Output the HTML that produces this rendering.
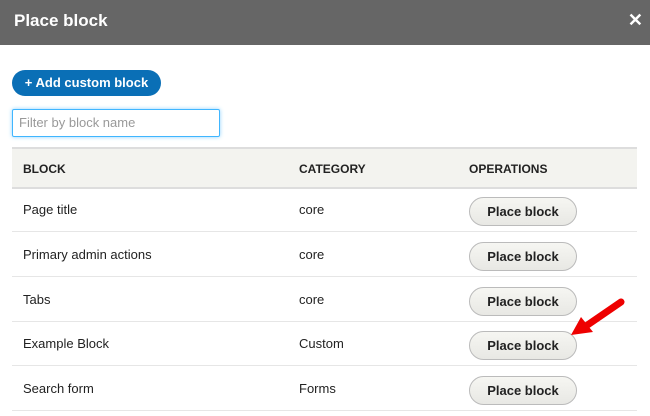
<!DOCTYPE html>
<html><head><style>
body{margin:0;width:650px;height:416px;background:#fff;font-family:"Liberation Sans",Arial,sans-serif;position:relative;overflow:hidden;color:#222}
.hd{position:absolute;left:0;top:0;width:650px;height:45px;background:#666;color:#fff;font-weight:bold;font-size:17px}
.hd span{position:absolute;left:14px;top:11px}
.hd b{position:absolute;right:7px;top:10px;font-size:18px}
.add{position:absolute;left:12px;top:70px;width:149px;height:26px;border-radius:14px;background:#0a6fb6;color:#fff;font-weight:bold;font-size:13px;line-height:26px;text-align:center}
.inp{position:absolute;left:12px;top:109px;width:206px;height:26px;border:1px solid #40b6ff;box-shadow:0 0 4px #8fd3ff;border-radius:2px;font-size:13px;color:#999;line-height:26px;text-indent:6px}
.th{position:absolute;left:12px;top:147px;width:625px;height:38px;background:#f3f3ef;border-top:2px solid #ddd;border-bottom:2px solid #ddd;font-weight:bold;font-size:12px}
.th span{position:absolute;top:13px}
.r span{position:absolute;top:15px}
.r{position:absolute;left:12px;width:625px;height:44px;border-bottom:1px solid #e6e6e6;font-size:13px}
.btn{position:absolute;left:457px;top:10px;width:106px;height:27px;border:1px solid #bbb;border-radius:15px;background:linear-gradient(#f6f6f2,#e8e8e4);font-weight:bold;font-size:13px;text-align:center;line-height:27px}
</style></head><body>
<div class="hd"><span>Place block</span><b>✕</b></div>
<div class="add">+ Add custom block</div>
<div class="inp">Filter by block name</div>
<div class="th"><span style="left:11px">BLOCK</span><span style="left:287px">CATEGORY</span><span style="left:457px">OPERATIONS</span></div>
<div class="r" style="top:187px"><span style="left:11px">Page title</span><span style="left:287px">core</span><div class="btn">Place block</div></div>
<div class="r" style="top:232px"><span style="left:11px">Primary admin actions</span><span style="left:287px">core</span><div class="btn">Place block</div></div>
<div class="r" style="top:277px"><span style="left:11px">Tabs</span><span style="left:287px">core</span><div class="btn">Place block</div></div>
<div class="r" style="top:321px"><span style="left:11px">Example Block</span><span style="left:287px">Custom</span><div class="btn">Place block</div></div>
<div class="r" style="top:366px"><span style="left:11px">Search form</span><span style="left:287px">Forms</span><div class="btn">Place block</div></div>
<svg style="position:absolute;left:0;top:0" width="650" height="416"><line x1="621" y1="302" x2="586" y2="326" stroke="#e00" stroke-width="7" stroke-linecap="round"/><polygon points="571,335 581,317 593,332" fill="#e00"/></svg>
</body></html>
